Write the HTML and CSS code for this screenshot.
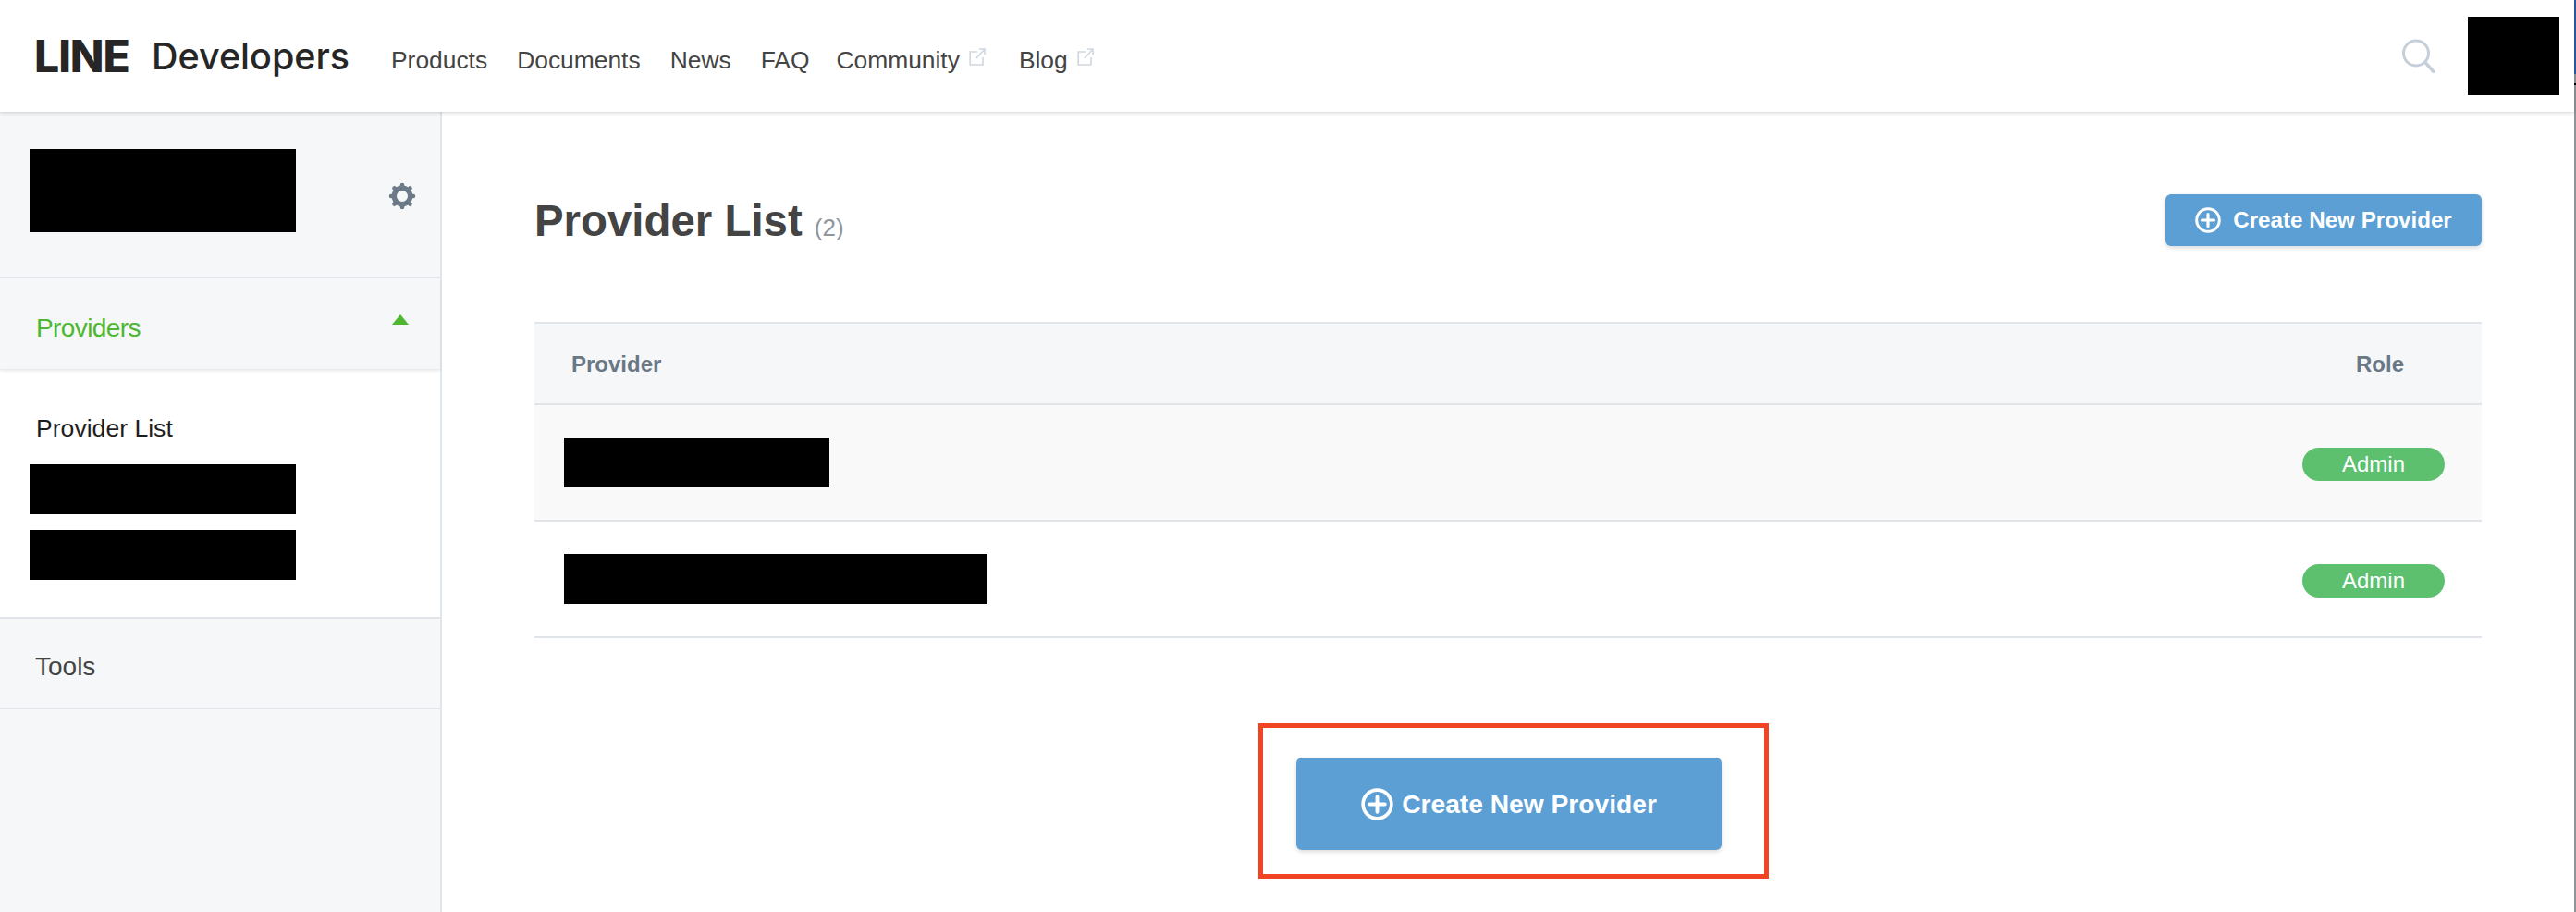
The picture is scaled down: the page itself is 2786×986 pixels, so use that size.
FILE: index.html
```html
<!DOCTYPE html>
<html lang="en">
<head>
<meta charset="utf-8">
<title>LINE Developers</title>
<link rel="stylesheet" href="styles.css">
</head>
<body>
<div class="page">
  <header class="topbar">
    <div class="brand"><span class="brand-line">LINE</span><span class="brand-dev">Developers</span></div>
    <nav class="nav">
      <a class="nav-item">Products</a>
      <a class="nav-item">Documents</a>
      <a class="nav-item">News</a>
      <a class="nav-item">FAQ</a>
      <a class="nav-item">Community<svg class="ext" viewBox="0 0 18 19" fill="none"><path d="M9 4H1.2V18H15V10M8 11L17 1M11 1H17V7" stroke="#cfd7e0" stroke-width="1.6"/></svg></a>
      <a class="nav-item">Blog<svg class="ext" viewBox="0 0 18 19" fill="none"><path d="M9 4H1.2V18H15V10M8 11L17 1M11 1H17V7" stroke="#cfd7e0" stroke-width="1.6"/></svg></a>
    </nav>
    <div class="top-right">
      <svg class="search" viewBox="0 0 36 36" fill="none"><circle cx="15" cy="15" r="13.5" stroke="#c5cfd9" stroke-width="3"/><path d="M25 25L34 35" stroke="#c5cfd9" stroke-width="3.4" stroke-linecap="round"/></svg>
      <div class="redact avatar"></div>
    </div>
  </header>
  <div class="body">
    <aside class="sidebar">
      <div class="side-top">
        <div class="redact side-name"></div>
        <svg class="gear" viewBox="0 0 30 30" fill="none"><circle cx="15" cy="15" r="8.700" stroke="#6d7a88" stroke-width="5.400"/><path d="M15 3V5M15 25V27M3 15H5M25 15H27M6.500 6.500L8 8M22 22L23.500 23.500M6.500 23.500L8 22M22 8L23.500 6.500" stroke="#6d7a88" stroke-width="4.600" stroke-linecap="round"/></svg>
      </div>
      <div class="side-head">
        <span class="side-head-text">Providers</span>
        <span class="caret"></span>
      </div>
      <div class="side-list">
        <div class="side-link">Provider List</div>
        <div class="redact side-item"></div>
        <div class="redact side-item"></div>
      </div>
      <div class="side-tools">Tools</div>
    </aside>
    <main class="main">
      <div class="title-row">
        <h1 class="title">Provider List <span class="count">(2)</span></h1>
        <button class="btn btn-small">
          <svg class="plus" viewBox="0 0 28 28" fill="none"><circle cx="14" cy="14" r="12.300" stroke="#fff" stroke-width="3"/><path d="M14 7.500V20.500M7.500 14H20.500" stroke="#fff" stroke-width="3.200" stroke-linecap="round"/></svg>
          Create New Provider
        </button>
      </div>
      <div class="table">
        <div class="row head"><span>Provider</span><span class="role-head">Role</span></div>
        <div class="row shade"><div class="redact cell-a"></div><span class="badge">Admin</span></div>
        <div class="row"><div class="redact cell-b"></div><span class="badge">Admin</span></div>
      </div>
      <div class="cta-wrap">
        <button class="btn btn-big">
          <svg class="plus-big" viewBox="0 0 36 36" fill="none"><circle cx="18" cy="18" r="15.800" stroke="#fff" stroke-width="3.800"/><path d="M18 9.500V26.500M9.500 18H26.500" stroke="#fff" stroke-width="4" stroke-linecap="round"/></svg>
          Create New Provider
        </button>
        <div class="annotation"></div>
      </div>
    </main>
  </div>
  <div class="edge"><span class="edge-blue"></span><span class="edge-black"></span></div>
</div>
</body>
</html>
```
FILE: styles.css
```css
* { box-sizing: border-box; }
html, body { margin: 0; height: 100%; }
body { background: #fff; font-family: "Liberation Sans", Arial, sans-serif; overflow: hidden; }
.page { position: relative; width: 2786px; height: 986px; padding-right: 2px; display: flex; flex-direction: column; }
.redact { background: #000; }

.topbar { height: 121px; flex: none; display: flex; align-items: center; padding-left: 37px; background: #fff; box-shadow: 0 1px 4px rgba(0,0,0,.18); position: relative; z-index: 2; }
.brand { display: flex; align-items: center; width: 386px; flex: none; }
.brand-line { font-family: Inter, "Liberation Sans", sans-serif; font-weight: 800; font-size: 48px; letter-spacing: -1px; color: #262626; width: 127px; line-height: 1; }
.brand-dev { font-family: Inter, "Liberation Sans", sans-serif; font-weight: 500; font-size: 39.500px; color: #262626; line-height: 1; padding-top: 2px; }
.nav { display: flex; gap: 32px; align-items: center; padding-top: 10px; }
.nav-item { font-size: 26.400px; color: #444; display: flex; align-items: center; }
.nav-item:nth-child(4) { margin-right: -3px; }
.nav-item:nth-child(5) { margin-right: 4px; }
.ext { width: 18px; height: 19px; margin-left: 10px; margin-top: -8px; }
.top-right { margin-left: auto; display: flex; align-items: center; padding-right: 16px; }
.search { width: 36px; height: 37px; margin-right: 35px; }
.avatar { width: 99px; height: 85px; }

.body { flex: 1; display: flex; min-height: 0; }
.sidebar { width: 478px; flex: none; background: #f5f7f9; border-right: 2px solid #dfe6ee; }
.side-top { height: 180px; padding: 40px 26px 0 32px; display: flex; justify-content: space-between; border-bottom: 2px solid #e3e7ec; }
.side-name { width: 288px; height: 90px; }
.gear { width: 30px; height: 30px; margin-top: 36px; }
.side-head { height: 98px; display: flex; align-items: center; justify-content: space-between; padding: 9px 34px 0 39px; box-shadow: 0 2px 3px rgba(0,0,0,.1); position: relative; }
.side-head-text { font-size: 28px; color: #4cb72f; letter-spacing: -.6px; }
.caret { width: 0; height: 0; border-left: 9px solid transparent; border-right: 9px solid transparent; border-bottom: 11px solid #4cb72f; margin-top: -19px; }
.side-list { background: #fff; height: 270px; padding: 45px 0 0 32px; border-bottom: 2px solid #e1e5ea; }
.side-link { font-size: 26.600px; color: #1e1e1e; padding-left: 7px; line-height: 38px; margin-bottom: 20px; }
.side-item { width: 288px; height: 54px; margin-bottom: 17px; }
.side-tools { height: 98px; display: flex; align-items: center; padding: 8px 0 0 38px; font-size: 28px; color: #444; border-bottom: 2px solid #e1e5ea; }

.main { flex: 1; padding: 0 100px 0 100px; }
.title-row { display: flex; justify-content: space-between; align-items: flex-start; height: 227px; padding-top: 89px; }
.title { margin: 1px 0 0; font-size: 47.400px; line-height: 56px; font-weight: 700; color: #444; }
.count { font-size: 26px; font-weight: 400; color: #8e969e; }
.btn { border: 0; background: #5c9fd4; color: #fff; font-family: inherit; font-weight: 700; display: flex; align-items: center; justify-content: center; box-shadow: 0 2px 5px rgba(0,0,0,.15); border-radius: 6px; }
.btn-small { width: 342px; height: 56px; font-size: 24.200px; }
.plus { width: 28px; height: 28px; margin-right: 13px; }
.btn-big { width: 460px; height: 100px; font-size: 28.200px; }
.plus-big { width: 35px; height: 35px; margin-right: 9px; }

.table { border-top: 2px solid #e1e6ec; }
.row { height: 126px; display: flex; align-items: center; justify-content: space-between; padding: 0 40px 0 32px; border-bottom: 2px solid #e1e5ea; }
.head { height: 88px; background: #f5f7f9; font-size: 24px; font-weight: 700; color: #6a7785; padding: 2px 84px 0 40px; }
.shade { background: #f9f9fa; }
.cell-a { width: 287px; height: 54px; }
.cell-b { width: 458px; height: 54px; }
.badge { width: 154px; height: 36px; margin-top: 3px; border-radius: 18px; background: #5cc06f; color: #fff; font-size: 24px; line-height: 36px; text-align: center; }

.cta-wrap { position: relative; display: flex; justify-content: center; padding: 129px 0 0 2px; }
.annotation { position: absolute; left: 783px; top: 92px; width: 552px; height: 168px; border: 5px solid #f04424; pointer-events: none; }

.edge { position: absolute; right: 0; top: 0; bottom: 0; width: 2px; background: #8f9497; }
.edge-blue { display: block; height: 80px; background: #2a5ca8; }
.edge-black { display: block; height: 2px; margin-top: 10px; background: #000; }
```
